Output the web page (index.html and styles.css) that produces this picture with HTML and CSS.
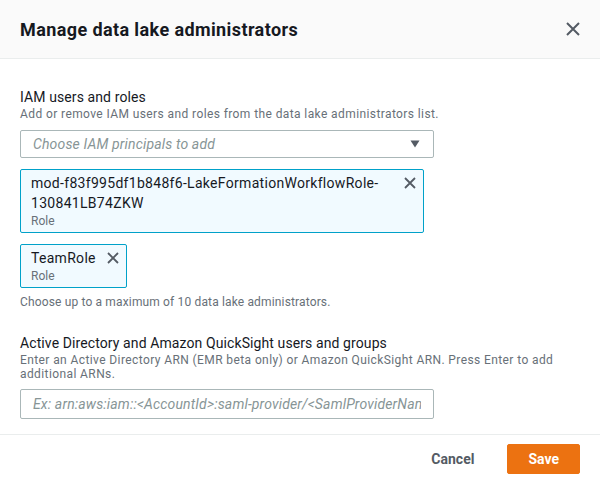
FILE: index.html
```html
<!DOCTYPE html>
<html lang="en">
<head>
<meta charset="utf-8">
<title>Manage data lake administrators</title>
<link rel="stylesheet" href="styles.css">
</head>
<body>
<div class="modal">
  <header class="modal-header">
    <h2 class="modal-title">Manage data lake administrators</h2>
    <button class="close-btn" aria-label="Close">
      <svg width="16" height="16" viewBox="0 0 16 16"><path d="M2 2 L14 14 M14 2 L2 14" stroke="#545b64" stroke-width="2" fill="none"/></svg>
    </button>
  </header>
  <div class="modal-body">
    <section class="field">
      <div class="field-label">IAM users and roles</div>
      <div class="field-desc">Add or remove IAM users and roles from the data lake administrators list.</div>
      <div class="control select">
        <span class="placeholder">Choose IAM principals to add</span>
        <svg class="caret" width="10" height="8" viewBox="0 0 10 8"><polygon points="0.5,0.5 9.5,0.5 5,7.5" fill="#545b64"/></svg>
      </div>
      <div class="tokens">
        <div class="token">
          <div class="token-text">
            <div class="token-name">mod-f83f995df1b848f6-LakeFormationWorkflowRole-130841LB74ZKW</div>
            <div class="token-tag">Role</div>
          </div>
          <button class="token-dismiss" aria-label="Remove">
            <svg width="12" height="12" viewBox="0 0 12 12"><path d="M1 1 L11 11 M11 1 L1 11" stroke="#545b64" stroke-width="1.8" fill="none"/></svg>
          </button>
        </div>
        <div class="token">
          <div class="token-text">
            <div class="token-name">TeamRole</div>
            <div class="token-tag">Role</div>
          </div>
          <button class="token-dismiss" aria-label="Remove">
            <svg width="12" height="12" viewBox="0 0 12 12"><path d="M1 1 L11 11 M11 1 L1 11" stroke="#545b64" stroke-width="1.8" fill="none"/></svg>
          </button>
        </div>
      </div>
      <div class="field-hint">Choose up to a maximum of 10 data lake administrators.</div>
    </section>
    <section class="field field-second">
      <div class="field-label">Active Directory and Amazon QuickSight users and groups</div>
      <div class="field-desc">Enter an Active Directory ARN (EMR beta only) or Amazon QuickSight ARN. Press Enter to add additional ARNs.</div>
      <div class="control input">
        <span class="placeholder">Ex: arn:aws:iam::&lt;AccountId&gt;:saml-provider/&lt;SamlProviderName&gt;</span>
      </div>
    </section>
  </div>
  <footer class="modal-footer">
    <button class="btn btn-link">Cancel</button>
    <button class="btn btn-primary">Save</button>
  </footer>
</div>
</body>
</html>
```

FILE: styles.css
```css
* {
  box-sizing: border-box;
}

html, body {
  margin: 0;
  padding: 0;
  background: #ffffff;
}

body {
  font-family: Roboto, "Liberation Sans", sans-serif;
  color: #16191f;
}

.modal {
  display: flex;
  flex-direction: column;
  width: 600px;
  height: 484px;
  background: #ffffff;
}

.modal-header {
  display: flex;
  align-items: center;
  justify-content: space-between;
  height: 59px;
  padding: 0 20px;
  background: #fafafa;
  border-bottom: 1px solid #eaeded;
}

.modal-title {
  margin: 0;
  font-size: 18px;
  line-height: 22px;
  font-weight: 700;
  letter-spacing: 0.4px;
  color: #16191f;
  padding-top: 1px;
}

.close-btn {
  display: flex;
  align-items: center;
  justify-content: center;
  width: 20px;
  height: 20px;
  padding: 0;
  margin-right: -3px;
  border: none;
  background: transparent;
}

.modal-body {
  flex: 1;
  padding: 28px 20px 0 20px;
}

.field {
  display: flex;
  flex-direction: column;
  align-items: flex-start;
}

.field-second {
  margin-top: 23px;
}

.field-label {
  font-size: 14px;
  line-height: 20px;
  letter-spacing: 0.1px;
  color: #16191f;
}

.field-desc {
  font-size: 12px;
  line-height: 14px;
  letter-spacing: 0.4px;
  color: #687078;
}

.control {
  display: flex;
  align-items: center;
  width: 414px;
  height: 28px;
  margin-top: 9px;
  padding: 0 12px 0 12px;
  border: 1px solid #aab7b8;
  border-radius: 2px;
  background: #ffffff;
  overflow: hidden;
}

.input {
  height: 30px;
  margin-top: 8px;
}

.placeholder {
  flex: 1;
  font-size: 14px;
  line-height: 20px;
  font-style: italic;
  letter-spacing: 0.15px;
  color: #879596;
  white-space: nowrap;
  overflow: hidden;
}

.caret {
  flex: none;
  margin-right: 1px;
}

.tokens {
  display: flex;
  flex-wrap: wrap;
  gap: 11px;
  width: 414px;
  margin-top: 11px;
}

.token {
  display: flex;
  align-items: flex-start;
  max-width: 404px;
  padding: 3px 3px 3px 10px;
  border: 1px solid #00a1c9;
  border-radius: 2px;
  background: #f1faff;
}

.token-text {
  min-width: 0;
}

.token-name {
  font-size: 14px;
  line-height: 20px;
  letter-spacing: 0.3px;
  color: #16191f;
}

.token-tag {
  font-size: 12px;
  line-height: 16px;
  color: #687078;
}

.token-dismiss {
  flex: none;
  display: flex;
  align-items: center;
  justify-content: center;
  width: 20px;
  height: 20px;
  margin-left: 7px;
  padding: 0;
  border: none;
  background: transparent;
}

.field-hint {
  margin-top: 6px;
  font-size: 12px;
  line-height: 16px;
  letter-spacing: 0.15px;
  color: #687078;
}

.modal-footer {
  display: flex;
  justify-content: flex-end;
  align-items: center;
  gap: 12px;
  height: 50px;
  padding: 9px 20px 10px 20px;
  border-top: 1px solid #eaeded;
}

.btn {
  height: 30px;
  padding: 0 20px;
  font-family: Roboto, "Liberation Sans", sans-serif;
  font-size: 14px;
  line-height: 20px;
  font-weight: 700;
  border-radius: 2px;
  border: 1px solid transparent;
}

.btn-link {
  background: transparent;
  color: #545b64;
}

.btn-primary {
  background: #ec7211;
  border-color: #ec7211;
  color: #ffffff;
}
```
